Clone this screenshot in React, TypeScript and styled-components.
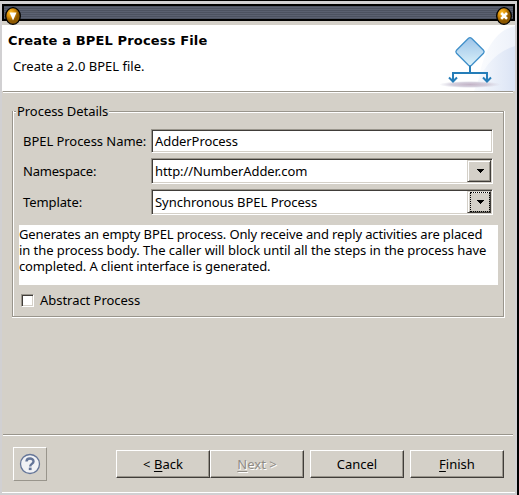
import React from "react";
import styled, { createGlobalStyle } from "styled-components";

const FACE = "#d4d0c8";
const SHADE = "#99958c";
const DARK = "#403d39";

const GlobalStyle = createGlobalStyle`
  * { box-sizing: border-box; }
  body { margin: 0; overflow: hidden; background: ${FACE}; }
`;

const Frame = styled.div`
  width: 519px;
  height: 495px;
  display: flex;
  flex-direction: column;
  padding: 3px 2px 2px;
  border-top: 1px solid #000;
  border-right: 2px solid #000;
  background: #d1d0d2;
  font: 13px/16px "Noto Sans", sans-serif;
  color: #000;
`;

const TitleBar = styled.div`
  flex: none;
  height: 17px;
  display: flex;
  justify-content: space-between;
  padding: 0 0 0 1px;
  border: 2px solid #000;
  background: repeating-linear-gradient(#4c5260 0 1px, #5a6070 1px 2px);
`;

const WindowButton = styled.svg`
  width: 17px;
  height: 19px;
  position: relative;
  z-index: 1;
  flex: none;
`;

const Body = styled.main`
  flex: 1;
  display: flex;
  flex-direction: column;
  padding-top: 4px;
  background: ${FACE};
  border-bottom: 1px solid #fff;
`;

const Header = styled.header`
  height: 66px;
  display: flex;
  justify-content: space-between;
  background: #fff;
`;

const Heading = styled.div`
  padding: 8px 0 0 6px;
`;

const Title = styled.h1`
  margin: 0;
  font: bold 13px/16px "DejaVu Sans", sans-serif;
  letter-spacing: 0.15px;
  white-space: nowrap;
`;

const Subtitle = styled.p`
  margin: 9px 0 0 5px;
`;

const Banner = styled.svg`
  width: 75px;
  height: 66px;
  flex: none;
`;

const Rule = styled.div`
  flex: none;
  height: 2px;
  margin: 0 2px 0 1px;
  border-top: 1px solid ${SHADE};
  border-bottom: 1px solid #fff;
`;

const Label = styled.span<{ $track?: number }>`
  letter-spacing: ${(p) => p.$track ?? 0}px;
  white-space: nowrap;
`;

const Group = styled.section`
  flex: none;
  width: 493px;
  height: 214px;
  margin: 10px 0 0 10px;
  display: flex;
  flex-direction: column;
`;

const LegendRow = styled.div`
  flex: none;
  display: flex;
  align-items: flex-start;
  height: 16px;
  margin-bottom: -8px;
`;

const EdgeLine = styled.span<{ $width?: number }>`
  ${(p) => (p.$width ? `width: ${p.$width}px;` : "flex: 1;")}
  height: 2px;
  margin-top: 8px;
  background: linear-gradient(${SHADE} 50%, #fff 50%);
`;

const Legend = styled.span`
  width: 93px;
  padding-left: 1px;
`;

const GroupBody = styled.div`
  flex: 1;
  display: flex;
  flex-direction: column;
  padding: 18px 4px 0 5px;
  margin-right: 1px;
  border: 1px solid ${SHADE};
  border-top: 0;
  box-shadow: inset 1px 0 #fff, 1px 0 #fff, 0 1px #fff, 1px 1px #fff;
`;

const FieldRow = styled.div<{ $height: number }>`
  flex: none;
  display: flex;
  align-items: center;
  height: ${(p) => p.$height}px;
  margin-bottom: 5px;
  padding-left: 5px;
`;

const FieldLabel = styled.label`
  flex: none;
  width: 128px;
`;

const Field = styled.div`
  flex: none;
  width: 342px;
  height: 100%;
  display: flex;
  align-items: center;
  justify-content: space-between;
  padding-left: 3px;
  background: #fff;
  border: 1px solid;
  border-color: ${SHADE} #fff #fff ${SHADE};
  box-shadow: inset 1px 1px ${DARK}, inset -1px -1px ${FACE};
`;

const DropButton = styled.button`
  width: 24px;
  height: 22px;
  margin-right: 1px;
  padding: 0;
  display: flex;
  align-items: center;
  justify-content: flex-end;
  background: ${FACE};
  border: 1px solid;
  border-color: ${FACE} ${DARK} ${DARK} ${FACE};
  box-shadow: inset 1px 1px #fff, inset -1px -1px ${SHADE};
`;

const ArrowFrame = styled.span<{ $focused?: boolean }>`
  width: 20px;
  height: 20px;
  display: flex;
  align-items: center;
  justify-content: center;
  border: 1px dotted ${(p) => (p.$focused ? "#000" : "transparent")};
`;

const Description = styled.div`
  flex: none;
  height: 60px;
  margin: 5px 0 0 1px;
  width: 479px;
  padding-top: 1px;
  background: #fff;
  display: flex;
  flex-direction: column;
`;

const CheckRow = styled.label`
  display: flex;
  align-items: center;
  gap: 6px;
  margin: 7px 0 0 3px;
`;

const CheckBox = styled.span`
  width: 13px;
  height: 13px;
  margin-top: 1px;
  background: #fff;
  border: 1px solid;
  border-color: ${SHADE} #fff #fff ${SHADE};
  box-shadow: inset 1px 1px ${DARK}, inset -1px -1px ${FACE};
`;

const Spacer = styled.div`
  flex: 1;
`;

const Footer = styled.footer`
  flex: none;
  height: 56px;
  display: flex;
  align-items: flex-start;
  padding: 11px 11px 0;
`;

const HelpButton = styled.button`
  width: 34px;
  height: 34px;
  margin-right: auto;
  padding: 0;
  display: flex;
  align-items: center;
  justify-content: center;
  background: ${FACE};
  border: 1px solid;
  border-color: #fff ${SHADE} ${SHADE} #fff;
`;

const PushButton = styled.button<{ $gap?: number; $muted?: boolean }>`
  width: 94px;
  height: 28px;
  margin: 3px 0 0 ${(p) => p.$gap ?? 0}px;
  padding: 0 0 1px;
  font: inherit;
  color: ${(p) => (p.$muted ? "#8f8b84" : "#000")};
  text-shadow: ${(p) => (p.$muted ? "1px 1px #fff" : "none")};
  background: ${FACE};
  border: 1px solid;
  border-color: #fff ${DARK} ${DARK} #fff;
  box-shadow: inset -1px -1px ${SHADE};
`;

const Mnemonic = styled.span`
  text-decoration: underline;
  text-underline-offset: 2px;
  text-decoration-thickness: 1px;
`;

const Orb = ({ close }: { close?: boolean }) => (
  <WindowButton viewBox="0 0 17 19">
    <defs>
      <radialGradient id={close ? "orbC" : "orbM"} cx=".35" cy=".3">
        <stop offset="0" stopColor="#ffc331" />
        <stop offset=".55" stopColor="#d98d08" />
        <stop offset="1" stopColor="#8d5800" />
      </radialGradient>
    </defs>
    <ellipse cx="8" cy="10" rx="7.3" ry="8.3" fill={`url(#${close ? "orbC" : "orbM"})`} stroke="#000" strokeWidth="1.3" />
    {close ? (
      <path d="M5.2 7l5.8 5.8M11 7l-5.8 5.8" stroke="#fff" strokeWidth="2.6" />
    ) : (
      <path d="M4.5 6.5h7L8 14.5z" fill="#fff" />
    )}
  </WindowButton>
);

const Arrow = () => (
  <svg width="7" height="4" viewBox="0 0 7 4" shapeRendering="crispEdges">
    <path d="M0 0h7v1H6v1H5v1H4v1H3V3H2V2H1V1H0z" fill="#000" />
  </svg>
);

const description: [string, number][] = [
  ["Generates an empty BPEL process. Only receive and reply activities are placed", -0.13],
  ["in the process body. The caller will block until all the steps in the process have", -0.065],
  ["completed. A client interface is generated.", -0.13],
];

export default function App() {
  return (
    <>
      <GlobalStyle />
      <Frame>
        <TitleBar>
          <Orb />
          <Orb close />
        </TitleBar>
        <Body>
          <Header>
            <Heading>
              <Title>Create a BPEL Process File</Title>
              <Subtitle><Label>Create a 2.0 BPEL file.</Label></Subtitle>
            </Heading>
            <Banner viewBox="0 0 75 66">
              <defs>
                <linearGradient id="swoosh" x1="0" x2="1">
                  <stop offset="0" stopColor="#f8fafd" />
                  <stop offset="1" stopColor="#dbe4f5" />
                </linearGradient>
                <linearGradient id="diamond" x2="0" y2="1">
                  <stop offset="0" stopColor="#9dc4e8" />
                  <stop offset="1" stopColor="#daf1fa" />
                </linearGradient>
                <radialGradient id="shadow">
                  <stop offset="0" stopColor="#c3b3c6" />
                  <stop offset=".6" stopColor="#d5cfdc" />
                  <stop offset="1" stopColor="#d8d8e5" stopOpacity="0" />
                </radialGradient>
              </defs>
              <path d="M75 1C55 6 43 24 36 66h39z" fill="url(#swoosh)" opacity=".5" />
              <path d="M75 21C55 27 42 43 34 66h41z" fill="url(#swoosh)" />
              <ellipse cx="30" cy="59.5" rx="31" ry="3.5" fill="url(#shadow)" />
              <path d="M28.5 13.3q1.5-1.3 3 0l12 12q1.3 1.5 0 3l-12 12q-1.5 1.3-3 0l-12-12q-1.3-1.5 0-3z" fill="url(#diamond)" stroke="#3f8fc9" strokeWidth="1.3" />
              <path d="M30 41v7M13 56v-8h34v8M9 52.5l4 4 4-4M43 52.5l4 4 4-4" fill="none" stroke="#257db8" strokeWidth="2" />
            </Banner>
          </Header>
          <Rule />
          <Group>
            <LegendRow>
              <EdgeLine $width={4} />
              <Legend><Label $track={-0.05}>Process Details</Label></Legend>
              <EdgeLine />
            </LegendRow>
            <GroupBody>
              <FieldRow $height={24}>
                <FieldLabel><Label $track={-0.05}>BPEL Process Name:</Label></FieldLabel>
                <Field><Label $track={-0.08}>AdderProcess</Label></Field>
              </FieldRow>
              <FieldRow $height={26}>
                <FieldLabel><Label $track={-0.2}>Namespace:</Label></FieldLabel>
                <Field>
                  <Label $track={-0.08}>http://NumberAdder.com</Label>
                  <DropButton><ArrowFrame><Arrow /></ArrowFrame></DropButton>
                </Field>
              </FieldRow>
              <FieldRow $height={26}>
                <FieldLabel><Label $track={-0.1}>Template:</Label></FieldLabel>
                <Field>
                  <Label $track={-0.04}>Synchronous BPEL Process</Label>
                  <DropButton><ArrowFrame $focused><Arrow /></ArrowFrame></DropButton>
                </Field>
              </FieldRow>
              <Description>
                {description.map(([line, track]) => <Label key={line} $track={track}>{line}</Label>)}
              </Description>
              <CheckRow><CheckBox /><Label $track={-0.04}>Abstract Process</Label></CheckRow>
            </GroupBody>
          </Group>
          <Spacer />
          <Rule />
          <Footer>
            <HelpButton>
              <svg width="22" height="22" viewBox="0 0 22 22">
                <circle cx="11" cy="11" r="9.5" fill="#f1f2f5" stroke="#647598" strokeWidth="1.3" />
                <path d="M7.5 8.6C7.5 4.5 14.5 4.6 14.5 8.4c0 2.5-3.3 2.5-3.3 5" fill="none" stroke="#647598" strokeWidth="2.4" />
                <rect x="9.8" y="14.6" width="2.8" height="2.5" fill="#647598" />
              </svg>
            </HelpButton>
            <PushButton><Label>&lt; <Mnemonic>B</Mnemonic>ack</Label></PushButton>
            <PushButton $muted><Label><Mnemonic>N</Mnemonic>ext &gt;</Label></PushButton>
            <PushButton $gap={6}><Label>Cancel</Label></PushButton>
            <PushButton $gap={6}><Label><Mnemonic>F</Mnemonic>inish</Label></PushButton>
          </Footer>
        </Body>
      </Frame>
    </>
  );
}
